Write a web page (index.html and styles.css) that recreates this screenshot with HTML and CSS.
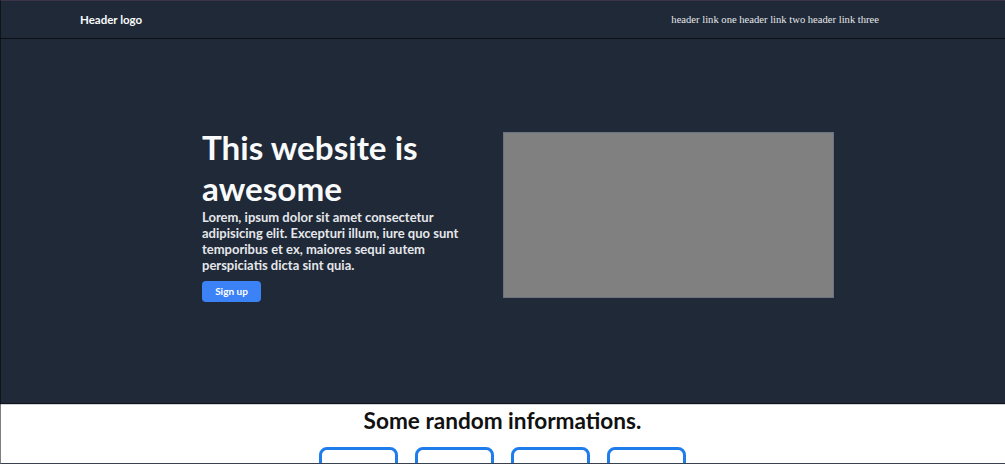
FILE: index.html
```html
<!DOCTYPE html>
<html lang="en">
<head>
<meta charset="utf-8">
<title>Landing page</title>
<link rel="stylesheet" href="styles.css">
</head>
<body>
<header class="site-header">
  <div class="logo">Header logo</div>
  <nav class="links">header link one header link two header link three</nav>
</header>
<section class="hero">
  <div class="hero-text">
    <h1 class="hero-title">This website is awesome</h1>
    <p class="hero-copy">Lorem, ipsum dolor sit amet consectetur adipisicing elit. Excepturi illum, iure quo sunt temporibus et ex, maiores sequi autem perspiciatis dicta sint quia.</p>
    <button class="signup">Sign up</button>
  </div>
  <div class="hero-image"></div>
</section>
<section class="info">
  <h2 class="info-title">Some random informations.</h2>
  <div class="cards">
    <div class="card"></div>
    <div class="card"></div>
    <div class="card"></div>
    <div class="card"></div>
  </div>
</section>
<div class="frame"></div>
</body>
</html>
```
FILE: styles.css
```css
html, body {
  margin: 0;
  padding: 0;
}
body {
  background: #ffffff;
  font-family: Lato, "Open Sans", sans-serif;
}
.site-header {
  background: #1f2937;
  height: 38px;
  border-bottom: 1px solid #0b0f16;
  display: flex;
  align-items: center;
  justify-content: space-between;
  padding: 0 126px 0 80px;
}
.logo {
  color: #f9fafb;
  font-weight: 700;
  font-size: 11.5px;
}
.links {
  color: #e5e7eb;
  font-family: "Liberation Serif", serif;
  font-size: 10.6px;
}
.hero {
  background: #1f2937;
  height: 365px;
  box-sizing: border-box;
  border-bottom: 1px solid #101318;
  display: flex;
  align-items: center;
  gap: 31px;
  padding: 2px 0 14px 202px;
}
.hero-text {
  width: 270px;
  margin-bottom: 2px;
  color: #f9fafb;
}
.hero-title {
  margin: 0;
  font-size: 33.2px;
  line-height: 41px;
  font-weight: 700;
}
.hero-copy {
  margin: 0;
  font-size: 13px;
  line-height: 16px;
  font-weight: 700;
  color: #e5e7eb;
}
.signup {
  margin-top: 8px;
  width: 59px;
  height: 21px;
  background: #3b82f6;
  color: #ffffff;
  border: none;
  border-radius: 4px;
  font-family: Lato, sans-serif;
  font-weight: 700;
  font-size: 10px;
  padding: 0;
}
.hero-image {
  width: 331px;
  height: 166px;
  box-sizing: border-box;
  background: #808080;
  border: 1px solid #6b7280;
}
.info {
  padding-top: 1px;
  border-top: 1px solid #d1d5db;
}
.info-title {
  margin: 0;
  text-align: center;
  font-size: 22.6px;
  line-height: 30px;
  font-weight: 700;
  color: #111111;
}
.cards {
  display: flex;
  justify-content: center;
  gap: 17px;
  margin-top: 11px;
}
.card {
  width: 79px;
  height: 70px;
  box-sizing: border-box;
  border: 3px solid #1e7deb;
  border-radius: 8px;
}
.frame {
  position: fixed;
  inset: 0;
  pointer-events: none;
  border-top: 1px solid #3b3347;
  border-left: 1px solid rgba(0, 0, 0, 0.5);
  border-bottom: 1px solid #394150;
}
```
